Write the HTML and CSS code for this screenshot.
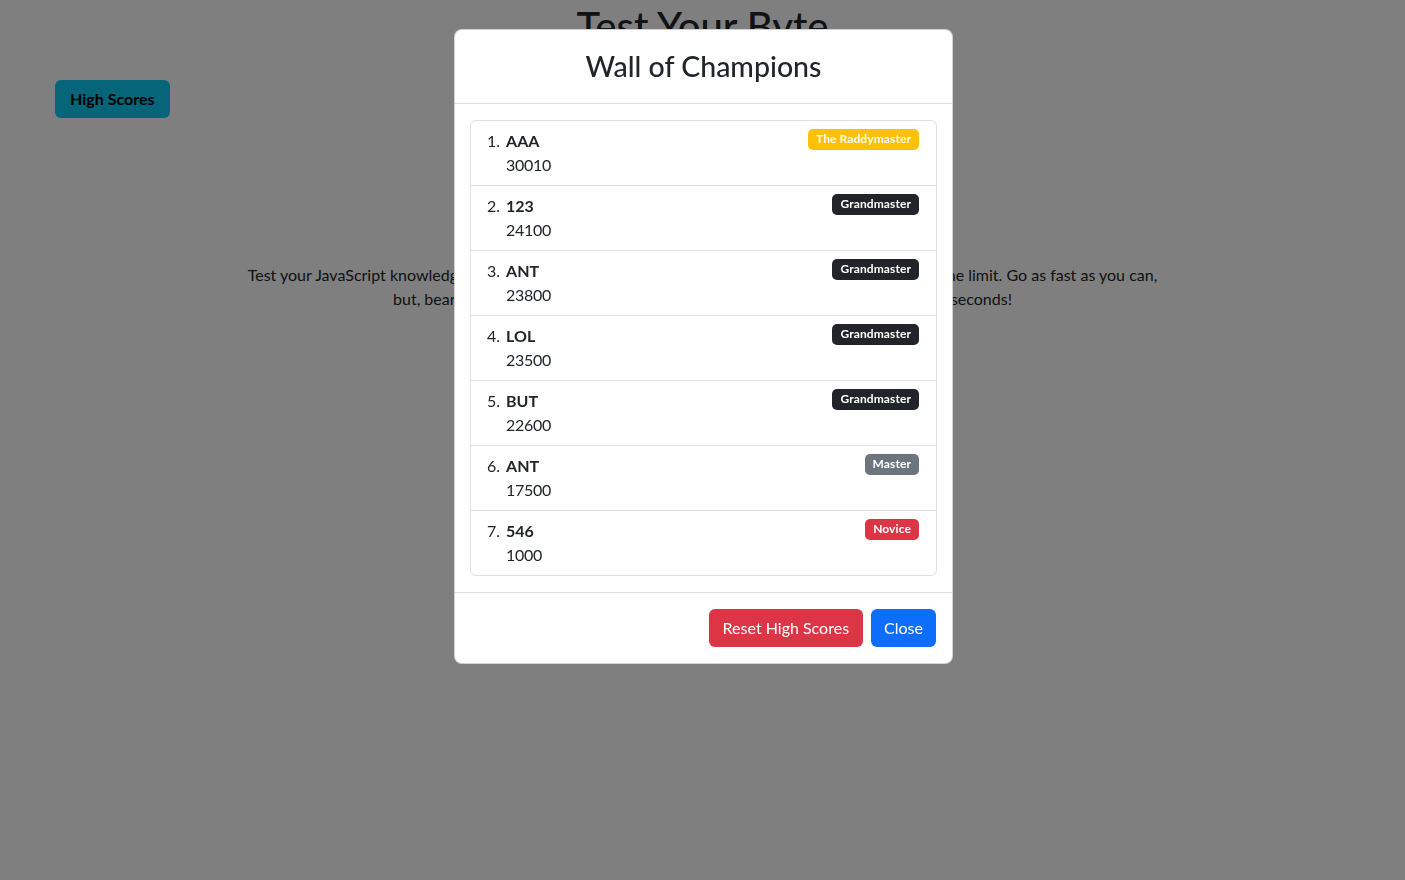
FILE: index.html
```html
<!DOCTYPE html>
<html lang="en">
<head>
<meta charset="utf-8">
<title>Test Your Byte</title>
<link rel="stylesheet" href="styles.css">
</head>
<body>
<div class="page">
  <h1 class="page-title">Test Your Byte</h1>
  <div class="toolbar">
    <button class="btn btn-info">High Scores</button>
  </div>
  <p class="intro">Test your JavaScript knowledge with this quiz! Answer as many questions as you can before you hit the limit. Go as fast as you can,<br>but, bear in mind that every single wrong answer you give will cost you a full 10 seconds!</p>
</div>

<div class="backdrop"></div>

<div class="modal">
  <div class="modal-content">
    <div class="modal-header">
      <h2 class="modal-title">Wall of Champions</h2>
    </div>
    <div class="modal-body">
      <ol class="list-group">
        <li class="list-item"><div class="entry"><div class="name">AAA</div><div class="score">30010</div></div><span class="badge badge-warning">The Raddymaster</span></li>
        <li class="list-item"><div class="entry"><div class="name">123</div><div class="score">24100</div></div><span class="badge badge-dark">Grandmaster</span></li>
        <li class="list-item"><div class="entry"><div class="name">ANT</div><div class="score">23800</div></div><span class="badge badge-dark">Grandmaster</span></li>
        <li class="list-item"><div class="entry"><div class="name">LOL</div><div class="score">23500</div></div><span class="badge badge-dark">Grandmaster</span></li>
        <li class="list-item"><div class="entry"><div class="name">BUT</div><div class="score">22600</div></div><span class="badge badge-dark">Grandmaster</span></li>
        <li class="list-item"><div class="entry"><div class="name">ANT</div><div class="score">17500</div></div><span class="badge badge-secondary">Master</span></li>
        <li class="list-item"><div class="entry"><div class="name">546</div><div class="score">1000</div></div><span class="badge badge-danger">Novice</span></li>
      </ol>
    </div>
    <div class="modal-footer">
      <button class="btn btn-danger">Reset High Scores</button>
      <button class="btn btn-primary">Close</button>
    </div>
  </div>
</div>
</body>
</html>
```
FILE: styles.css
```css
* { box-sizing: border-box; }
html, body { margin: 0; padding: 0; }
body {
  font-family: Lato, "Noto Sans", "Liberation Sans", sans-serif;
  font-size: 16px;
  line-height: 1.5;
  color: #212529;
  background: #fff;
  height: 880px;
  overflow: hidden;
}
.page { padding: 0; }
.page-title {
  margin: 0;
  padding-top: 2px;
  text-align: center;
  font-size: 40px;
  font-weight: 500;
  line-height: 1.2;
}
.toolbar { padding: 30px 0 0 55px; }
.intro {
  margin: 145px auto 0;
  max-width: 960px;
  text-align: center;
}
.btn {
  font-family: inherit;
  font-size: 16px;
  line-height: 24px;
  padding: 6px 12px;
  border: 1px solid transparent;
  border-radius: 6px;
  cursor: pointer;
}
.btn-info { background: #0dcaf0; color: #000; font-weight: 700; padding: 6px 15px 6px 14px; }
.btn-danger { background: #dc3545; color: #fff; padding: 6px 13px; }
.btn-primary { background: #0d6efd; color: #fff; }

.backdrop {
  position: fixed;
  inset: 0;
  background: rgba(0, 0, 0, 0.5);
}
.modal {
  position: fixed;
  top: 29px;
  left: 454px;
  width: 499px;
}
.modal-content {
  background: #fff;
  border: 1px solid rgba(0, 0, 0, 0.175);
  border-radius: 8px;
  display: flex;
  flex-direction: column;
}
.modal-header {
  padding: 15px 16px 16px;
  border-bottom: 1px solid #dee2e6;
}
.modal-title {
  margin: 0;
  text-align: center;
  font-size: 28.5px;
  font-weight: 500;
  line-height: 42px;
}
.modal-body { padding: 16px 15px 16px 15px; }
.list-group {
  list-style: none;
  margin: 0;
  padding: 0;
  border: 1px solid #dee2e6;
  border-radius: 6px;
  counter-reset: section;
}
.list-item {
  display: flex;
  justify-content: space-between;
  align-items: flex-start;
  padding: 8px 16px;
  border-bottom: 1px solid #dee2e6;
  counter-increment: section;
}
.list-item:last-child { border-bottom: 0; }
.list-item::before { content: counter(section) ". "; }
.entry { margin-left: 6px; margin-right: auto; }
.name { font-weight: 700; }
.score { letter-spacing: -0.3px; }
.badge {
  display: inline-block;
  font-size: 12px;
  font-weight: 700;
  line-height: 1;
  color: #fff;
  padding: 4px 8px 5px;
  border-radius: 5px;
  margin-top: 0;
  margin-right: 1px;
  letter-spacing: 0.1px;
}
.badge-warning { background: #ffc107; }
.badge-dark { background: #212529; }
.badge-secondary { background: #6c757d; }
.badge-danger { background: #dc3545; }
.modal-footer {
  display: flex;
  justify-content: flex-end;
  align-items: center;
  padding: 12px;
  border-top: 1px solid #dee2e6;
}
.modal-footer .btn { margin: 4px; }
```
